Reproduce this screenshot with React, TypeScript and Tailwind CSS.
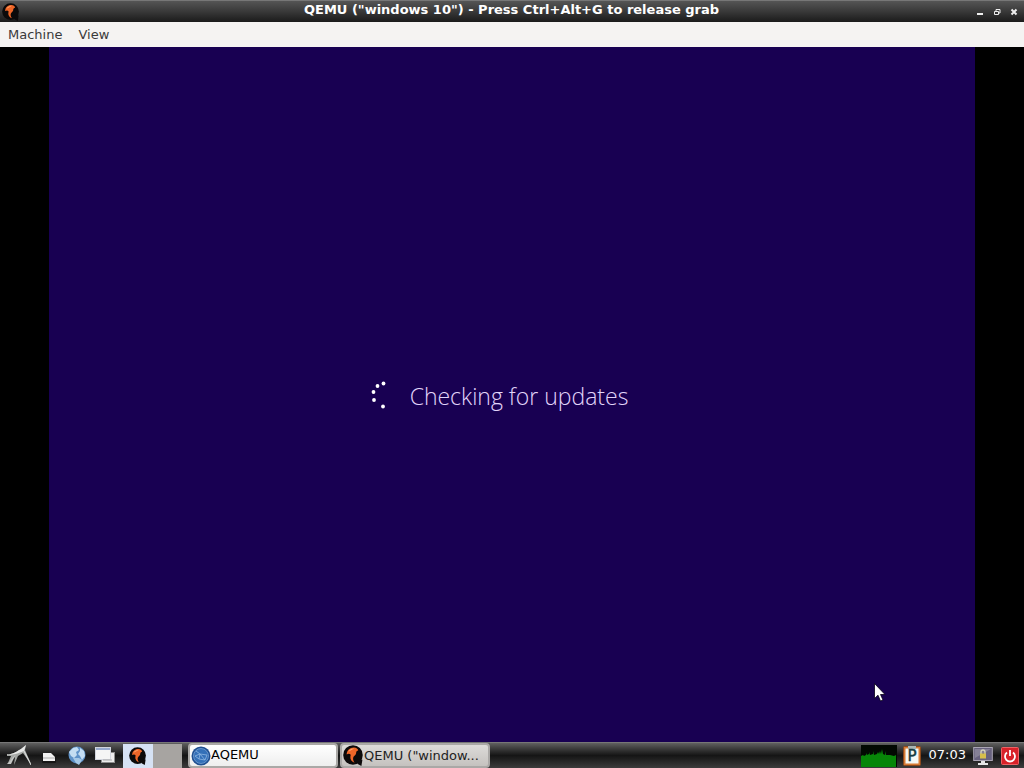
import { type JSX } from "react";

type IconProps = {
    className?: string;
};

function QemuIcon({ className }: IconProps): JSX.Element {
    return (
        <svg viewBox="0 0 20 20" className={className} aria-hidden="true">
            <circle cx="9.5" cy="9.5" r="9.3" fill="#0c0a0a" />
            <path d="M12 13 18.5 14 17.5 20 14 18Z" fill="#0c0a0a" />
            <path
                d="M3.5 9C3.500 5 6.500 2.200 10.500 2.300c2.300.1 3.700 1.200 4 3-1.300.2-2 1-2 2.200 0 1.600-1.300 2.300-2.300 3.500-1 1.300-.8 3.500.8 6C8.500 16.200 6.700 13.800 7 11.500c.1-1 .6-1.800 0-2.600-.8-1-2.300-.8-3.500.1Z"
                fill="#ee6628"
            />
            <path d="M5 6.500C6.300 4.200 8.300 3.200 10.500 3.500 8.500 4.300 7 5.500 5 6.500Z" fill="#ffa46b" />
        </svg>
    );
}

function LxdeIcon(): JSX.Element {
    return (
        <svg viewBox="0 0 28 24" className="w-7 h-6" aria-hidden="true">
            <path d="M4 10c6 1 10-3 14-5l5-4-1 5 7 16-9-13-5 3-4 9 1-8-7 6 3-7-4 0Z" fill="#a4a7a4" />
            <path d="M4 10c6 1 10-3 14-5l5-4-2 6C15 9 10 12 4 10Z" fill="#e8e9e8" />
            <path d="M4 20 13 10 8 20Z" fill="#c4c6c4" />
            <path d="M21 7 28 21" fill="none" stroke="#e0e2e0" />
        </svg>
    );
}

function FileManagerIcon(): JSX.Element {
    return (
        <svg viewBox="0 0 20 20" className="w-5 h-5" aria-hidden="true">
            <rect x="3" y="8" width="14" height="9" rx="1" fill="#171717" />
            <path d="M4 7h8l4 4v4H4Z" fill="#f2f2f2" />
            <path d="M4 11h12v2H4Z" fill="#cecece" />
        </svg>
    );
}

function GlobeIcon(): JSX.Element {
    return (
        <svg viewBox="0 0 20 20" className="w-5 h-5" aria-hidden="true">
            <circle cx="10" cy="9" r="8.5" fill="#5f92c8" />
            <path d="M2 6 6 2l4-1 2 3-3 2 1 3-3 3-3-2ZM13 2l4 3 1 5-3 4-2-4-2-2 2-3Z" fill="#c4ddf2" />
            <path d="M6 12l6 0 3 2-3 5-3-2Z" fill="#a4c7e6" />
        </svg>
    );
}

function WindowsIcon(): JSX.Element {
    return (
        <svg viewBox="0 0 20 20" className="w-5 h-5" aria-hidden="true">
            <rect x="6.5" y="6.5" width="13" height="10" fill="#ececec" stroke="#8e8e8e" />
            <rect x=".5" y="1.5" width="15" height="12" fill="#f5f5f5" stroke="#d1d4dc" />
            <path d="M1 2h14v2H1Z" fill="#97a9ce" />
            <path d="M8 14h9" stroke="#aaaaaa" />
        </svg>
    );
}

function AqemuIcon(): JSX.Element {
    return (
        <svg viewBox="0 0 20 20" className="w-5 h-5 shrink-0" aria-hidden="true">
            <circle cx="10" cy="10" r="9.5" fill="#1f4f91" />
            <circle cx="10" cy="10" r="7.5" fill="#3470b8" stroke="#7fa9da" strokeWidth=".7" />
            <path d="m5 5 4 3 7 1-2 5-6-1-4-3 5-2 5 6M9 8l-1 5" fill="none" stroke="#8fb6e2" strokeWidth=".8" />
        </svg>
    );
}

function CpuGraph(): JSX.Element {
    return (
        <svg viewBox="0 0 36 22" className="w-9 h-[22px]" aria-hidden="true">
            <rect width="36" height="22" fill="#020902" />
            <path
                d="M0 22V11l2-1 1 1 2-1V8l1 2 2-1V7l1 3 3-1V6l1 4 3-1 1-2 1 2 1-3 1 3 1-5 1 5 2 1V6l1 4 4 0 4 1 2-1V22Z"
                fill="#078608"
            />
        </svg>
    );
}

function ClipboardIcon(): JSX.Element {
    return (
        <svg viewBox="0 0 20 22" className="w-5 h-[22px]" aria-hidden="true">
            <rect x="1.5" y="1.5" width="17" height="19" rx="1" fill="#d67b34" stroke="#8c481c" />
            <rect x="3.5" y="3.5" width="13" height="15" fill="#f4f8f5" />
            <path d="M6 1h8v3H6Z" fill="#a9b5b3" />
            <text x="10" y="16" textAnchor="middle" fontFamily="DejaVu Sans, sans-serif" fontSize="15" fill="#153b43" stroke="#153b43" strokeWidth=".5">
                P
            </text>
        </svg>
    );
}

function LockScreenIcon(): JSX.Element {
    return (
        <svg viewBox="0 0 20 20" className="w-5 h-5" aria-hidden="true">
            <rect x=".7" y="1.5" width="18.6" height="13" fill="#67617e" stroke="#aaa5b4" />
            <path d="M2 3h16L2 12Z" fill="#858096" />
            <path d="M8 15h4v2h3v2H5v-2h3Z" fill="#e6e6e6" />
            <path d="M8 8V6a2 2 0 0 1 4 0v2" fill="none" stroke="#d7d3bc" strokeWidth="1.3" />
            <rect x="7" y="7.5" width="6" height="5" fill="#d7bf4c" />
        </svg>
    );
}

function PowerIcon(): JSX.Element {
    return (
        <svg viewBox="0 0 18 18" className="w-[18px] h-[18px]" aria-hidden="true">
            <rect x=".5" y=".5" width="17" height="17" rx="1" fill="#d82229" stroke="#ed6265" />
            <path d="M6 5.5a5 5 0 1 0 6 0M9 3v6" fill="none" stroke="#ffffff" strokeWidth="1.8" />
        </svg>
    );
}

function TitleBar(): JSX.Element {
    return (
        <header className="flex items-center h-[22px] px-[2px] border-t border-[#777777] bg-linear-to-b from-[#555555] via-[#393939] via-50% to-[#1b1b1b]">
            <QemuIcon className="w-[18px] h-[18px]" />
            <h1 className="flex-1 pl-8 pb-1 text-center text-[13px] leading-4 font-bold text-white">
                QEMU ("windows 10") - Press Ctrl+Alt+G to release grab
            </h1>
            <div className="flex">
                <button type="button" aria-label="Minimize" className="w-[17px] h-4 flex items-center justify-center">
                    <svg viewBox="0 0 8 8" className="w-2 h-2" aria-hidden="true">
                        <path d="M1 5h6v2H1Z" fill="#eeeeee" />
                    </svg>
                </button>
                <button type="button" aria-label="Restore" className="w-[17px] h-4 flex items-center justify-center">
                    <svg viewBox="0 0 8 8" className="w-2 h-2" aria-hidden="true">
                        <path d="M3 3V1.5h4V5H5.5M1.5 3.5h4v3h-4Z" fill="none" stroke="#eeeeee" />
                    </svg>
                </button>
                <button type="button" aria-label="Close" className="w-[17px] h-4 flex items-center justify-center">
                    <svg viewBox="0 0 8 8" className="w-2 h-2" aria-hidden="true">
                        <path d="m1.5 1.5 5 5m0-5-5 5" fill="none" stroke="#eeeeee" strokeWidth="2" />
                    </svg>
                </button>
            </div>
        </header>
    );
}

function MenuBar(): JSX.Element {
    return (
        <nav className="flex items-center gap-4 h-[25px] px-2 bg-[#f5f3f2] text-[13px] leading-4 text-[#3a3a3a]">
            <button type="button">Machine</button>
            <button type="button">View</button>
        </nav>
    );
}

function Spinner(): JSX.Element {
    return (
        <svg viewBox="0 0 32 32" className="w-8 h-8" fill="#ffffff" aria-hidden="true">
            <circle cx="13.5" cy="3.5" r="1.9" />
            <circle cx="7.500" cy="6" r="1.9" />
            <circle cx="3.5" cy="12" r="1.9" />
            <circle cx="4" cy="20" r="1.9" />
            <circle cx="13" cy="26.5" r="1.9" />
        </svg>
    );
}

function Pointer(): JSX.Element {
    return (
        <svg viewBox="0 0 12 19" className="absolute right-[138px] bottom-10 w-3 h-[19px]" aria-hidden="true">
            <path d="M.5.5v15l3.5-3.3L6.500 18l2.5-1-2.5-5.5H11Z" fill="#ffffff" stroke="#080018" strokeWidth=".8" />
        </svg>
    );
}

function Taskbar(): JSX.Element {
    return (
        <footer className="flex items-center h-[26px] border-t border-[#777777] bg-linear-to-b from-[#606060] via-[#151515] via-50% to-[#3c3c3c] text-[13px] leading-4">
            <div className="flex items-center gap-2 pl-[3px]">
                <button type="button" aria-label="Menu">
                    <LxdeIcon />
                </button>
                <button type="button" aria-label="File manager">
                    <FileManagerIcon />
                </button>
                <button type="button" aria-label="Web browser">
                    <GlobeIcon />
                </button>
                <button type="button" aria-label="Show desktop">
                    <WindowsIcon />
                </button>
            </div>
            <div className="flex ml-2 h-6">
                <button type="button" aria-label="Desktop 1" className="w-[30px] flex items-center justify-center bg-[#d6e2f4]">
                    <QemuIcon className="w-[18px] h-[18px]" />
                </button>
                <button type="button" aria-label="Desktop 2" className="w-[29px] bg-[#a7a4a1]"></button>
            </div>
            <div className="flex flex-1 min-w-0 gap-[2px] ml-[6px] h-[25px]">
                <button
                    type="button"
                    className="w-[150px] flex items-center pl-px rounded border-2 border-[#aaa8a6] bg-linear-to-b from-[#ffffff] to-[#eeeeee] text-black"
                >
                    <AqemuIcon />
                    <span className="pb-[2px]">AQEMU</span>
                </button>
                <button
                    type="button"
                    className="w-[150px] flex items-center pl-px rounded border-2 border-[#aaa8a6] bg-linear-to-b from-[#dddbd9] to-[#c5c2bf] text-[#222222]"
                >
                    <QemuIcon className="w-[21px] h-[21px] shrink-0" />
                    <span className="whitespace-nowrap">QEMU ("window...</span>
                </button>
            </div>
            <div className="flex items-center gap-[5px] pr-[5px]">
                <CpuGraph />
                <ClipboardIcon />
                <time className="px-[2px] pb-[2px] text-white">07:03</time>
                <button type="button" aria-label="Lock screen">
                    <LockScreenIcon />
                </button>
                <button type="button" aria-label="Log out" className="pl-[3px]">
                    <PowerIcon />
                </button>
            </div>
        </footer>
    );
}

function App(): JSX.Element {
    return (
        <div className="flex flex-col min-h-screen bg-black font-['DejaVu_Sans',sans-serif]">
            <TitleBar />
            <MenuBar />
            <main className="relative flex flex-1 px-[49px]">
                <section className="flex flex-1 items-center justify-center gap-2 pt-[2px] pr-[26px] bg-[#180052]">
                    <Spinner />
                    <p className="font-['Open_Sans',sans-serif] font-light text-[23px] leading-8 text-[#e2d5fa]">
                        Checking for updates
                    </p>
                </section>
                <Pointer />
            </main>
            <Taskbar />
        </div>
    );
}

export default App;
